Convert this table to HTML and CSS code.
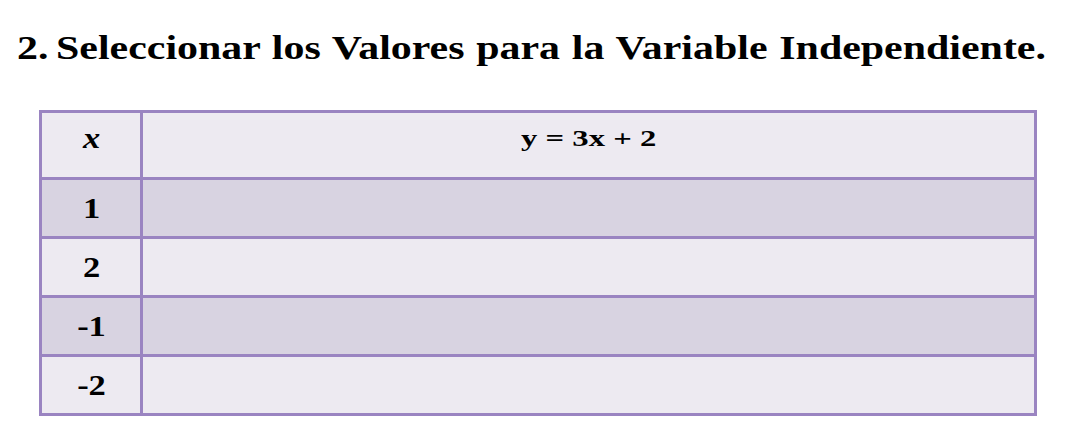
FILE: index.html
```html
<!DOCTYPE html>
<html lang="es">
<head>
<meta charset="utf-8">
<link rel="stylesheet" href="styles.css">
</head>
<body>
<h1 class="title"><span class="stretch"><span class="num">2.</span>Seleccionar los Valores para la Variable Independiente.</span></h1>
<table class="values">
  <tr class="head"><td class="xcol"><span class="cell-text"><i>x</i></span></td><td class="ycol"><span class="eq">y = 3x + 2</span></td></tr>
  <tr class="dark"><td class="xcol"><span class="cell-text">1</span></td><td></td></tr>
  <tr class="light"><td class="xcol"><span class="cell-text">2</span></td><td></td></tr>
  <tr class="dark"><td class="xcol"><span class="cell-text">-1</span></td><td></td></tr>
  <tr class="light"><td class="xcol"><span class="cell-text">-2</span></td><td></td></tr>
</table>
</body>
</html>
```
FILE: styles.css
```css
html, body { margin: 0; padding: 0; background: #ffffff; }
body { font-family: "Liberation Serif", "Times New Roman", Times, serif; color: #000; }
.title {
  margin: 0;
  padding: 28px 0 0 17px;
  font-size: 33px;
  line-height: 40px;
  font-weight: bold;
  white-space: nowrap;
}
.stretch {
  display: inline-block;
  transform: scaleX(1.27);
  transform-origin: left center;
  word-spacing: 1px;
}
.num { margin-right: 6px; }
.values {
  margin: 42px 0 0 39px;
  border-collapse: collapse;
  width: 998px;
}
.values td {
  border: 3px solid #9a84c1;
  padding: 0;
  font-weight: bold;
  text-align: center;
  vertical-align: middle;
  height: 59px;
  box-sizing: border-box;
}
.values tr.head td { height: 67px; padding-bottom: 14px; }
.values td.xcol { width: 101px; }
.cell-text {
  display: inline-block;
  font-size: 30px;
  transform: scaleX(1.15);
}
.eq {
  display: inline-block;
  font-size: 24px;
  transform: scaleX(1.36);
}
.head td, .light td { background: #edeaf1; }
.dark td { background: #d8d3e1; }
```
